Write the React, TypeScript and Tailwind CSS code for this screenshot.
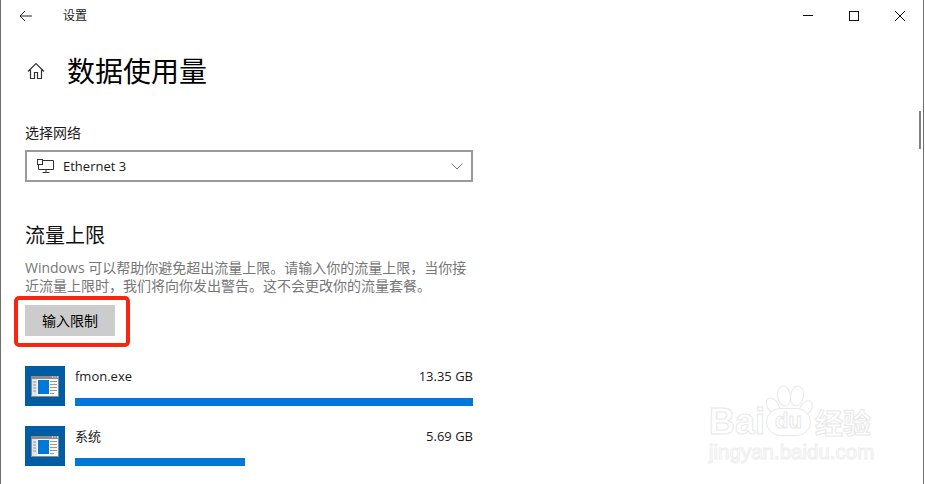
const fontStack = "font-['Open_Sans','Noto_Sans_CJK_SC',sans-serif]"

function AppIcon() {
    return (
        <div className="w-10 h-10 shrink-0 bg-[#005da3] flex items-center justify-center">
            <svg width="28" height="21" viewBox="0 0 28 21">
                <rect width="28" height="21" fill="#8c8c8c" />
                <path d="M21 1h1M23.500 1h1M26 1h1" stroke="#ddd" strokeWidth="1.500" />
                <rect x="1" y="3" width="26" height="17" fill="#f7f7f7" />
                <rect x="1" y="3" width="5" height="17" fill="#e4e4e4" />
                <rect x="7" y="4" width="11" height="14" fill="#0078d7" />
                <path d="M2 6h3M2 9h3M2 12h3M2 15h3" stroke="#999" />
                <path d="M19 5.500h7M19 8.500h7M19 11.500h7M19 14.500h7M19 17.500h4" stroke="#999" />
            </svg>
        </div>
    )
}

function UsageRow({ name, size, barClass }: { name: string; size: string; barClass: string }) {
    return (
        <div className="flex gap-2.5 h-10">
            <AppIcon />
            <div className="w-[398px] flex flex-col justify-between">
                <div className="flex justify-between text-[13px] leading-5 text-[#1a1a1a]">
                    <span>{name}</span>
                    <span>{size}</span>
                </div>
                <div className={`h-2 bg-[#0078d7] ${barClass}`}></div>
            </div>
        </div>
    )
}

function Watermark() {
    return (
        <div className="absolute left-[708px] top-[404px] w-[170px] font-['Liberation_Sans',sans-serif] text-transparent select-none">
            <svg width="60" height="48" viewBox="0 0 60 48" className="absolute left-[51px] -top-[20px]" fill="#fff" stroke="#e8e8e8">
                <ellipse cx="24" cy="12" rx="6.500" ry="10" transform="rotate(-8 24 12)" />
                <ellipse cx="37" cy="12" rx="6.500" ry="10" transform="rotate(10 37 12)" />
                <ellipse cx="13" cy="22" rx="5.500" ry="9" transform="rotate(-35 13 22)" />
                <ellipse cx="46" cy="24" rx="5.500" ry="8" transform="rotate(35 46 24)" />
            </svg>
            <div className="relative flex items-center h-9">
                <span className="w-[52px] text-[36px] font-bold leading-none [-webkit-text-stroke:1px_#e8e8e8]">Bai</span>
                <span className="ml-[5px] mr-[4px] w-[45px] h-[28px] rounded-full border border-[#e8e8e8] bg-white text-[22px] leading-[24px] text-center font-bold [-webkit-text-stroke:1px_#e8e8e8]">du</span>
                <span className="text-[28px] font-bold leading-none font-['Noto_Sans_CJK_SC',sans-serif] [-webkit-text-stroke:1px_#e8e8e8]">经验</span>
            </div>
            <div className="text-[20.5px] leading-6 [-webkit-text-stroke:1px_#eeeeee]">jingyan.baidu.com</div>
        </div>
    )
}

export default function App() {
    return (
        <div className={`relative w-[924px] h-[484px] overflow-hidden bg-white border-x border-[#6f6f6f] ${fontStack}`}>
            {/* title bar */}
            <div className="h-[31px] flex items-center text-[#1a1a1a]">
                <svg width="13" height="12" viewBox="0 0 13 12" className="ml-[18px]" fill="none" stroke="#222" strokeWidth="1">
                    <path d="M13 6H1M6 1 1 6l5 5" />
                </svg>
                <span className="ml-[31px] text-xs leading-none">设置</span>
                <div className="ml-auto flex items-center mr-[18px] gap-[36px]">
                    <div className="w-2.5 h-px bg-[#111]"></div>
                    <div className="w-2.5 h-2.5 border border-[#111]"></div>
                    <svg width="10" height="10" viewBox="0 0 10 10" stroke="#111" strokeWidth="1">
                        <path d="M0 0l10 10M10 0 0 10" />
                    </svg>
                </div>
            </div>

            <div className="pl-[24px] w-[472px]">
                {/* page heading */}
                <div className="flex items-center h-[40px] mt-5">
                    <svg width="18" height="18" viewBox="0 0 18 18" className="ml-[2px]" fill="none" stroke="#333" strokeWidth="1.200">
                        <path d="M1 9.500 9 1.500l8 8M3.500 7.500V16.500H7.500V10.500H10.500V16.500H14.500V7.500" />
                    </svg>
                    <h1 className="ml-[22px] text-[28px] leading-10 text-black">数据使用量</h1>
                </div>

                {/* network select */}
                <div className="mt-[32px] text-sm leading-5 text-[#1a1a1a]">选择网络</div>
                <div className="mt-[7px] h-8 border-2 border-[#999] flex items-center pl-[10px] pr-[8px]">
                    <svg width="17" height="14" viewBox="0 0 17 14" fill="none" stroke="#333">
                        <path d="M5.500 1.500H16.500V10.500H1.500V5.500M9 10.500V13M5.500 13.500H12.500" />
                        <rect x="0.500" y="0.500" width="5" height="5" />
                    </svg>
                    <span className="ml-[9px] pt-[2px] text-[13px] text-[#1a1a1a]">Ethernet 3</span>
                    <svg width="12" height="7" viewBox="0 0 12 7" className="ml-auto" fill="none" stroke="#777">
                        <path d="M.5.5 6 6 11.500.5" />
                    </svg>
                </div>

                {/* data limit */}
                <h2 className="mt-10 text-xl leading-7 text-[#111]">流量上限</h2>
                <p className="mt-[9px] text-sm leading-[18px] text-[#767676] whitespace-nowrap">
                    Windows 可以帮助你避免超出流量上限。请输入你的流量上限，当你接<br />
                    近流量上限时，我们将向你发出警告。这不会更改你的流量套餐。
                </p>
                <button className="mt-2.5 block w-[90px] h-[31px] bg-[#ccc] text-sm leading-none text-black">输入限制</button>

                {/* per-app usage */}
                <div className="mt-[30px] flex flex-col gap-5">
                    <UsageRow name="fmon.exe" size="13.35 GB" barClass="w-full" />
                    <UsageRow name="系统" size="5.69 GB" barClass="w-[170px]" />
                </div>
            </div>

            {/* scrollbar thumb */}
            <div className="absolute right-[2px] top-[111px] w-[2px] h-[38px] bg-[#808080]"></div>

            {/* red annotation box */}
            <div className="absolute left-[13px] top-[296px] w-[116px] h-[51px] border-[4px] border-[#fb2412] rounded-[5px]"></div>

            <Watermark />
        </div>
    )
}
